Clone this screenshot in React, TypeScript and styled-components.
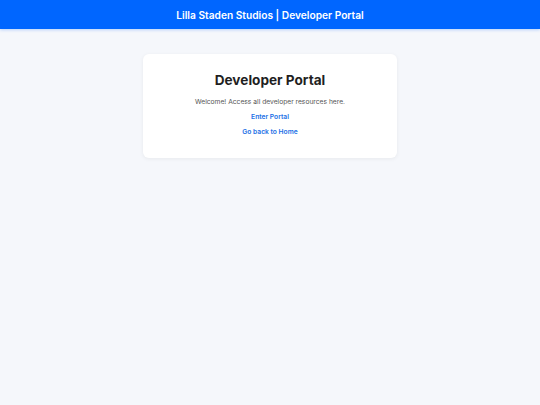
import styled, { createGlobalStyle } from "styled-components";

const GlobalStyle = createGlobalStyle`
    html, body {
        margin: 0;
        padding: 0;
        background: #f5f7fb;
        font-family: Inter, "Noto Sans", sans-serif;
    }
`

export default function App() {
    return (
        <>
            <GlobalStyle />
            <Page>
                <Header>Lilla Staden Studios | Developer Portal</Header>
                <Card>
                    <Title>Developer Portal</Title>
                    <Welcome>Welcome! Access all developer resources here.</Welcome>
                    <PortalLink href="#">Enter Portal</PortalLink>
                    <PortalLink href="#">Go back to Home</PortalLink>
                </Card>
            </Page>
        </>
    );
}

const Page = styled.div`
    min-height: 405px;
    background: #f5f7fb;
    display: flex;
    flex-direction: column;
    align-items: center;
`

const Header = styled.header`
    align-self: stretch;
    height: 29px;
    display: flex;
    align-items: center;
    justify-content: center;
    background: #0066ff;
    color: #ffffff;
    font-size: 10.2px;
    font-weight: 600;
    box-shadow: 0 1px 3px rgba(0, 102, 255, 0.25);
`

const Card = styled.main`
    width: 254px;
    box-sizing: border-box;
    margin-top: 25px;
    padding: 17px 16px 21px;
    background: #ffffff;
    border-radius: 6px;
    box-shadow: 0 1px 4px rgba(0, 0, 0, 0.06);
    display: flex;
    flex-direction: column;
    align-items: center;
`

const Title = styled.h1`
    margin: 0 0 8px;
    font-size: 13.6px;
    font-weight: 700;
    color: #1f1f1f;
    line-height: 19px;
`

const Welcome = styled.p`
    margin: 0;
    font-size: 6.7px;
    line-height: 9px;
    color: #555555;
`

const PortalLink = styled.a`
    display: block;
    margin-top: 6px;
    font-size: 6.7px;
    line-height: 9px;
    font-weight: 600;
    color: #1a6fe6;
    text-decoration: none;
`
